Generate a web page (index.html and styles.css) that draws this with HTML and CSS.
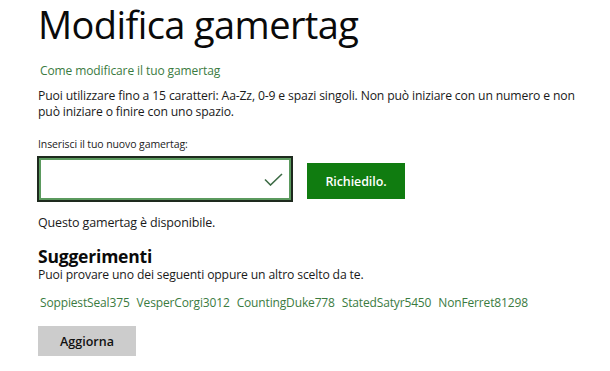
FILE: index.html
```html
<!DOCTYPE html>
<html lang="it">
<head>
<meta charset="utf-8">
<link rel="stylesheet" href="styles.css">
</head>
<body>
<main class="page">
  <h1 class="title">Modifica gamertag</h1>
  <a class="help-link" href="#">Come modificare il tuo gamertag</a>
  <p class="rules">Puoi utilizzare fino a 15 caratteri: Aa-Zz, 0-9 e spazi singoli. Non può iniziare con un numero e non può iniziare o finire con uno spazio.</p>
  <label class="field-label">Inserisci il tuo nuovo gamertag:</label>
  <div class="field-row">
    <div class="input-box">
      <div class="input-inner">
        <svg class="check" width="19" height="13" viewBox="0 0 19 13"><path d="M1 6.5 L6.5 12 L18 1" fill="none" stroke="#3d6b45" stroke-width="1.6"/></svg>
      </div>
    </div>
    <button class="btn-primary">Richiedilo.</button>
  </div>
  <p class="status">Questo gamertag è disponibile.</p>
  <h2 class="sub">Suggerimenti</h2>
  <p class="sub-text">Puoi provare uno dei seguenti oppure un altro scelto da te.</p>
  <div class="suggestions">
    <a href="#">SoppiestSeal375</a>
    <a href="#">VesperCorgi3012</a>
    <a href="#">CountingDuke778</a>
    <a href="#">StatedSatyr5450</a>
    <a href="#">NonFerret81298</a>
  </div>
  <button class="btn-secondary">Aggiorna</button>
</main>
</body>
</html>
```
FILE: styles.css
```css
* { box-sizing: border-box; }
html, body { margin: 0; padding: 0; background: #fff; }
body {
  font-family: "Open Sans", "Noto Sans", sans-serif;
  color: #111;
  width: 610px;
  height: 371px;
  overflow: hidden;
}
.page {
  padding: 0 0 0 38px;
  display: flex;
  flex-direction: column;
  align-items: flex-start;
}
.title {
  margin: 0;
  padding-top: 4px;
  font-size: 38px;
  font-weight: 400;
  line-height: 40px;
  letter-spacing: -0.6px;
  color: #0a0a0a;
}
.help-link {
  margin-top: 19px;
  margin-left: 2px;
  font-size: 12px;
  line-height: 16px;
  color: #3b7b3f;
  text-decoration: none;
  letter-spacing: -0.1px;
}
.rules {
  margin: 9px 0 0;
  font-size: 12.2px;
  line-height: 16px;
  width: 545px;
  letter-spacing: -0.15px;
  color: #1a1a1a;
}
.field-label {
  margin-top: 17px;
  font-size: 10.5px;
  line-height: 14px;
  color: #222;
  letter-spacing: -0.1px;
}
.field-row {
  margin-top: 5px;
  display: flex;
  align-items: center;
  gap: 14px;
  margin-left: -1px;
}
.input-box {
  width: 256px;
  height: 46px;
  border: 2px solid #1e2a1e;
  background: #fff;
}
.input-inner {
  height: 100%;
  border: 2px solid #5b9a5e;
  display: flex;
  align-items: center;
  justify-content: flex-end;
  padding-right: 6px;
}
.check { display: block; }
.btn-primary {
  margin-top: 4px;
  width: 98px;
  height: 36px;
  border: 0;
  background: #107c10;
  color: #fff;
  font-family: inherit;
  font-size: 12.5px;
  font-weight: 600;
  letter-spacing: -0.1px;
  padding: 0;
}
.status {
  margin: 12px 0 0;
  font-size: 12.5px;
  line-height: 18px;
  letter-spacing: -0.15px;
  color: #1a1a1a;
}
.sub {
  margin: 13px 0 0;
  font-size: 17.5px;
  font-weight: 700;
  line-height: 22px;
  letter-spacing: -0.2px;
  color: #0a0a0a;
}
.sub-text {
  margin: 0;
  font-size: 12.2px;
  line-height: 16px;
  letter-spacing: -0.15px;
  color: #1a1a1a;
}
.suggestions {
  margin-top: 12px;
  margin-left: 2px;
  display: flex;
  gap: 7px;
}
.suggestions a {
  font-size: 12px;
  line-height: 16px;
  color: #3b7b3f;
  text-decoration: none;
  letter-spacing: -0.15px;
}
.btn-secondary {
  margin-top: 15px;
  width: 98px;
  height: 30px;
  border: 0;
  background: #cccccc;
  color: #111;
  font-family: inherit;
  font-size: 12.5px;
  font-weight: 600;
  padding: 0;
}
```
